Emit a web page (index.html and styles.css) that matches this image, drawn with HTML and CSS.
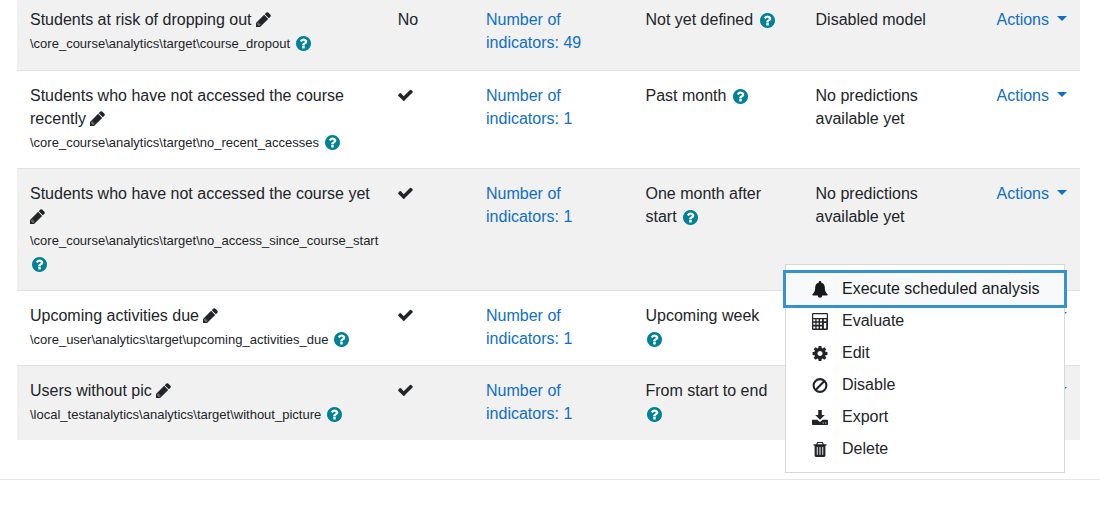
FILE: index.html
```
<!DOCTYPE html>
<html lang="en">
<head>
<meta charset="utf-8">
<title>Analytics models</title>
<link rel="stylesheet" href="styles.css">
</head>
<body>
<svg class="sprite" aria-hidden="true">
  <symbol id="pencil" viewBox="128 128 1536 1536"><path d="M491 1536l91-91-235-235-91 91v107h128v128h107zm523-928q0-22-22-22-10 0-17 7l-542 542q-7 7-7 17 0 22 22 22 10 0 17-7l542-542q7-7 7-17z" opacity=".75"/><path d="M491 1536l91-91-235-235-91 91v107h128v128h107zm469-1120l416 416-832 832h-416v-416zm683 96q0 53-37 90l-166 166-416-416 166-165q36-38 90-38 53 0 91 38l235 234q37 39 37 91z" fill-rule="evenodd"/></symbol>
  <symbol id="help" viewBox="128 128 1536 1536"><circle cx="896" cy="896" r="700" fill="#fff"/><path d="M1024 1376v-192q0-14-9-23t-23-9h-192q-14 0-23 9t-9 23v192q0 14 9 23t23 9h192q14 0 23-9t9-23zm256-672q0-88-55.500-163t-138.500-116-170-41q-243 0-371 213-15 24 8 42l132 100q7 6 19 6 16 0 25-12 53-68 86-92 34-24 86-24 48 0 85.500 26t37.500 59q0 38-20 61t-68 45q-63 28-115.500 86.500t-52.500 125.500v36q0 14 9 23t23 9h192q14 0 23-9t9-23q0-19 21.500-49.500t54.500-49.500q32-18 49-28.500t46-35 44.500-48 28-60.500 12.500-81zm384 192q0 209-103 385.500t-279.500 279.500-385.500 103-385.500-103-279.500-279.500-103-385.500 103-385.500 279.500-279.500 385.500-103 385.500 103 279.500 279.500 103 385.500z"/></symbol>
  <symbol id="check" viewBox="110 160 1580 1580"><path d="M1671 566q0 40-28 68l-724 724-136 136q-28 28-68 28t-68-28l-136-136-362-362q-28-28-28-68t28-68l136-136q28-28 68-28t68 28l294 295 656-657q28-28 68-28t68 28l136 136q28 28 28 68z"/></symbol>
  <symbol id="cog" viewBox="77 77 1638 1638"><path d="M1152 896q0-106-75-181t-181-75-181 75-75 181 75 181 181 75 181-75 75-181zm512-109v222q0 12-8 23t-20 13l-185 28q-19 54-39 91 35 50 107 138 10 12 10 25t-9 23q-27 37-99 108t-94 71q-12 0-26-9l-138-108q-44 23-91 38-16 136-29 186-7 28-36 28h-222q-14 0-24.500-8.500t-11.500-21.500l-28-184q-49-16-90-37l-141 107q-10 9-25 9-14 0-25-11-126-114-165-168-7-10-7-23 0-12 8-23 15-21 51-66.500t54-70.500q-27-50-41-99l-183-27q-13-2-21-12.500t-8-23.500v-222q0-12 8-23t19-13l186-28q14-46 39-92-40-57-107-138-10-12-10-24 0-10 9-23 26-36 98.500-107.500t94.500-71.500q13 0 26 10l138 107q44-23 91-38 16-136 29-186 7-28 36-28h222q14 0 24.500 8.500t11.500 21.500l28 184q49 16 90 37l142-107q9-9 24-9 13 0 25 10 129 119 165 170 7 8 7 22 0 12-8 23-15 21-51 66.500t-54 70.500q26 50 41 98l183 28q13 2 21 12.500t8 23.500z"/></symbol>
  <symbol id="bell" viewBox="0 0 16 17"><path d="M8 0a1.100 1.100 0 0 1 1.100 1.400C11.500 1.900 12.800 3.900 12.800 6.200c0 3.600.9 5.500 2.900 7.200 0 .7-.5 1.100-1.100 1.100h-4.400a2.200 2.200 0 0 1-4.400 0H1.400C.8 14.500.3 14.100.3 13.400c2-1.700 2.900-3.600 2.900-7.200 0-2.300 1.300-4.300 3.700-4.800A1.100 1.100 0 0 1 8 0z"/></symbol>
  <symbol id="calculator" viewBox="0 0 16 17"><path fill-rule="evenodd" d="M1.200 0h13.600Q16 0 16 1.200v14.600q0 1.200-1.200 1.200H1.200Q0 17 0 15.800V1.200Q0 0 1.200 0zM1.200 1.200v3.800h13.600V1.200zM1.300 6.300v2h2v-2zM4.600 6.300v2h2v-2zM8 6.300v2h2v-2zM11.800 6.300v2h2.500v-2zM1.300 9.800v2h2v-2zM4.600 9.800v2h2v-2zM8 9.800v2h2v-2zM1.300 13.400v2h2v-2zM4.600 13.400v2h2v-2zM8 13.400v2h2v-2zM11.900 10v5.400h2.300V10z"/></symbol>
  <symbol id="ban" viewBox="0 0 16 16"><g fill="none" stroke="currentColor" stroke-width="2.100"><circle cx="8" cy="8" r="6.400"/><path d="M3.600 12.400l8.800-8.800"/></g></symbol>
  <symbol id="export" viewBox="0 0 16 16"><path fill-rule="evenodd" d="M6.200.5h3.600v5h3L8 10.300 3.200 5.500h3zM.8 10.200h4.500L8 12.600l2.700-2.400h4.500q.8 0 .8.800v3.700q0 .8-.8.800H.8q-.8 0-.8-.8V11q0-.8.8-.8zM10.700 13v1h1v-1zM13.200 13v1h1v-1z"/></symbol>
  <symbol id="trash" viewBox="0 0 16 16"><path fill-rule="evenodd" d="M5.200.5h5.600l1 2.300h2.700v1.300h-1.100v10q0 1.400-1.300 1.400H3.900q-1.300 0-1.300-1.400v-10H1.500V2.800h2.700zM6 1.600l-.5 1.200h5L10 1.600zM4.800 5.500v7.700h.9V5.500zM7.500 5.500v7.700h1V5.500zM10.300 5.500v7.700h.9V5.500z"/></symbol>
</svg>

<main class="content">
  <table class="models">
    <colgroup>
      <col class="col-name"><col class="col-enabled"><col class="col-indicators"><col class="col-interval"><col class="col-insights"><col class="col-actions">
    </colgroup>
    <tbody>
      <tr>
        <td>Students at risk of dropping out <svg class="icon"><use href="#pencil"/></svg>
          <div class="path">\core_course\analytics\target\course_dropout <svg class="icon help"><use href="#help"/></svg></div></td>
        <td>No</td>
        <td><a href="#indicators">Number of indicators: 49</a></td>
        <td>Not yet defined <svg class="icon help"><use href="#help"/></svg></td>
        <td>Disabled model</td>
        <td><div class="actions"><button class="toggle" type="button">Actions</button></div></td>
      </tr>
      <tr>
        <td>Students who have not accessed the course recently <svg class="icon"><use href="#pencil"/></svg>
          <div class="path">\core_course\analytics\target\no_recent_accesses <svg class="icon help"><use href="#help"/></svg></div></td>
        <td><svg class="icon"><use href="#check"/></svg></td>
        <td><a href="#indicators">Number of indicators: 1</a></td>
        <td>Past month <svg class="icon help"><use href="#help"/></svg></td>
        <td>No predictions available yet</td>
        <td><div class="actions"><button class="toggle" type="button">Actions</button></div></td>
      </tr>
      <tr>
        <td>Students who have not accessed the course yet <svg class="icon"><use href="#pencil"/></svg>
          <div class="path">\core_course\analytics\target\no_access_since_course_start <svg class="icon help"><use href="#help"/></svg></div></td>
        <td><svg class="icon"><use href="#check"/></svg></td>
        <td><a href="#indicators">Number of indicators: 1</a></td>
        <td>One month after start <svg class="icon help"><use href="#help"/></svg></td>
        <td>No predictions available yet</td>
        <td><div class="actions"><button class="toggle" type="button" aria-expanded="true">Actions</button>
          <div class="menu">
            <a class="item active" href="#execute"><svg class="glyph"><use href="#bell"/></svg>Execute scheduled analysis</a>
            <a class="item" href="#evaluate"><svg class="glyph"><use href="#calculator"/></svg>Evaluate</a>
            <a class="item" href="#edit"><svg class="glyph"><use href="#cog"/></svg>Edit</a>
            <a class="item" href="#disable"><svg class="glyph"><use href="#ban"/></svg>Disable</a>
            <a class="item" href="#export-model"><svg class="glyph"><use href="#export"/></svg>Export</a>
            <a class="item" href="#delete"><svg class="glyph"><use href="#trash"/></svg>Delete</a>
          </div></div></td>
      </tr>
      <tr>
        <td>Upcoming activities due <svg class="icon"><use href="#pencil"/></svg>
          <div class="path">\core_user\analytics\target\upcoming_activities_due <svg class="icon help"><use href="#help"/></svg></div></td>
        <td><svg class="icon"><use href="#check"/></svg></td>
        <td><a href="#indicators">Number of indicators: 1</a></td>
        <td>Upcoming week <svg class="icon help"><use href="#help"/></svg></td>
        <td></td>
        <td><div class="actions"><button class="toggle" type="button" aria-label="Actions"></button></div></td>
      </tr>
      <tr>
        <td>Users without pic <svg class="icon"><use href="#pencil"/></svg>
          <div class="path">\local_testanalytics\analytics\target\without_picture <svg class="icon help"><use href="#help"/></svg></div></td>
        <td><svg class="icon"><use href="#check"/></svg></td>
        <td><a href="#indicators">Number of indicators: 1</a></td>
        <td>From start to end <svg class="icon help"><use href="#help"/></svg></td>
        <td></td>
        <td><div class="actions"><button class="toggle" type="button" aria-label="Actions"></button></div></td>
      </tr>
    </tbody>
  </table>
</main>
</body>
</html>
```
FILE: styles.css
```
* { box-sizing: border-box; }

body {
  margin: 0;
  min-height: 100vh;
  background: #fff;
  color: #212529;
  font: 16px/23px "Liberation Sans", Arial, sans-serif;
}

.sprite { display: none; }

.content {
  padding: 0 20px 39px 17px;
  border-bottom: 1px solid #e3e5e7;
}

.models {
  width: 100%;
  table-layout: fixed;
  border-collapse: separate;
  border-spacing: 0;
}

.col-name { width: 34.6%; }
.col-enabled { width: 8.3%; }
.col-indicators { width: 15%; }
.col-interval { width: 16%; }
.col-insights { width: 17%; }
.col-actions { width: 9.1%; }

.models td {
  padding: 13px 13px 11px;
  border-top: 1px solid #dee2e6;
  vertical-align: top;
}

.models tr:first-child td {
  padding: 8px 13px 12px;
  border-top: 0;
}

.models tr:nth-child(odd) td { background: #f1f1f1; }

a { color: #0f6fc5; text-decoration: none; }

.path {
  padding: 1px 0 2px;
  font-size: 13px;
  line-height: 24px;
}

.icon {
  width: 15px;
  height: 15px;
  fill: currentColor;
  vertical-align: -2px;
}

.help {
  margin: 0 10px 0 2px;
  color: #008196;
  vertical-align: -3px;
}

.actions {
  position: relative;
  display: flex;
  justify-content: flex-end;
}

.toggle {
  display: flex;
  align-items: center;
  gap: 8px;
  height: 23px;
  padding: 0;
  border: 0;
  background: none;
  color: #0f6fc5;
  font: inherit;
}

.toggle::after {
  content: "";
  margin-bottom: 3px;
  border: 5px solid transparent;
  border-top-color: currentColor;
  border-bottom: 0;
}

.menu {
  position: absolute;
  z-index: 1;
  top: 82px;
  right: 2px;
  width: 280px;
  padding: 8px 0 7px;
  border: 1px solid #d5d7d9;
  background: #fff;
}

.item {
  display: flex;
  align-items: center;
  gap: 14px;
  padding: 4px 24px 4px 26px;
  color: #212529;
  line-height: 24px;
  white-space: nowrap;
}

.item.active {
  outline: 3px solid #3592d0;
  background: #f8f9fa;
  color: #16181b;
}

.glyph {
  flex: none;
  width: 16px;
  height: 17px;
  fill: currentColor;
}
```
